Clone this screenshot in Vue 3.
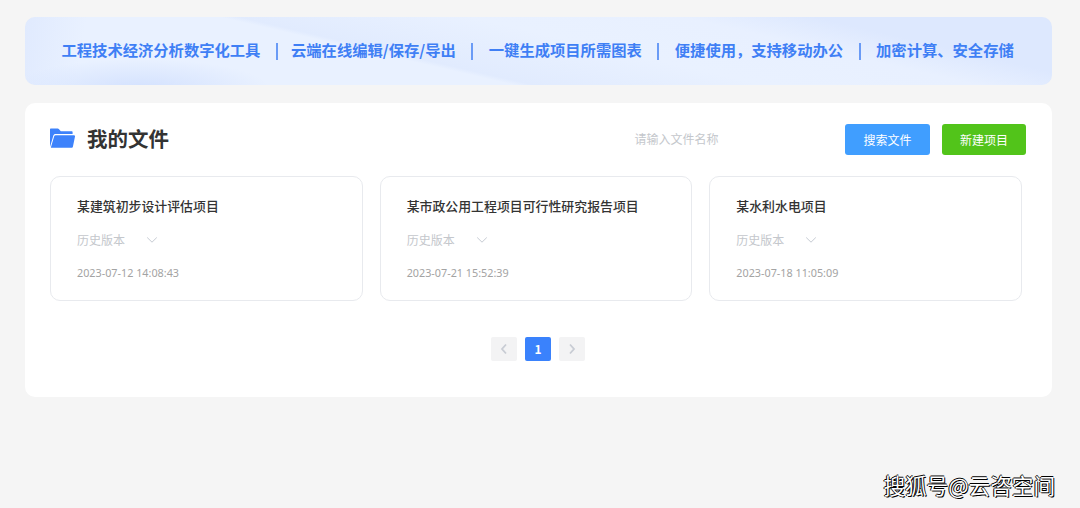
<script setup>
const slogans = [
  '工程技术经济分析数字化工具',
  '云端在线编辑/保存/导出',
  '一键生成项目所需图表',
  '便捷使用，支持移动办公',
  '加密计算、安全存储'
]

const files = [
  { id: 1, name: '某建筑初步设计评估项目', time: '2023-07-12 14:08:43' },
  { id: 2, name: '某市政公用工程项目可行性研究报告项目', time: '2023-07-21 15:52:39' },
  { id: 3, name: '某水利水电项目', time: '2023-07-18 11:05:09' }
]
</script>

<template>
  <div class="page">
    <div class="banner">
      <template v-for="(text, i) in slogans" :key="text">
        <i v-if="i > 0" class="sep"></i>
        <span>{{ text }}</span>
      </template>
    </div>

    <div class="panel">
      <div class="head">
        <div class="title">
          <svg class="folder" viewBox="0 0 25 20" width="25" height="20">
            <path d="M0 19V1.5C0 .9.4.5 1 .5h6.8c.4 0 .7.2 1 .5l2 2.2h10.8c.6 0 1 .4 1 1v1.9H5.6c-1.2 0-2 .6-2.3 1.7L0 19z" fill="#3d82fb" />
            <path d="M5.7 7.2H24c.7 0 1.1.5 1 1.2l-2.1 10.4c-.1.6-.5.9-1.1.9H.8L4.2 8.3c.2-.7.7-1.1 1.5-1.1z" fill="#3d82fb" />
          </svg>
          <h1>我的文件</h1>
        </div>
        <div class="search">请输入文件名称</div>
        <button class="btn btn-blue">搜索文件</button>
        <button class="btn btn-green">新建项目</button>
      </div>

      <div class="cards">
        <div v-for="file in files" :key="file.id" class="card">
          <div class="name">{{ file.name }}</div>
          <div class="history">
            <span>历史版本</span>
            <svg viewBox="0 0 12 8" width="12" height="8">
              <path d="M1.2 1.5 6 6.2l4.8-4.7" fill="none" stroke="#c6cbd3" stroke-width="1" />
            </svg>
          </div>
          <div class="time">{{ file.time }}</div>
        </div>
      </div>

      <div class="pager">
        <div class="pg">
          <svg viewBox="0 0 8 12" width="8" height="12"><path d="M6 1.5 2 6l4 4.5" fill="none" stroke="#c8ccd4" stroke-width="1.8" /></svg>
        </div>
        <div class="pg active">1</div>
        <div class="pg">
          <svg viewBox="0 0 8 12" width="8" height="12"><path d="M2 1.5 6 6l-4 4.5" fill="none" stroke="#c8ccd4" stroke-width="1.8" /></svg>
        </div>
      </div>
    </div>

    <div class="mark">搜狐号@云咨空间</div>
  </div>
</template>

<style>
html, body { margin: 0; background: #f5f5f5; }
</style>

<style scoped>
.page {
  position: relative;
  height: 508px;
  box-sizing: border-box;
  padding: 17px 28px 0 25px;
  background: #f5f5f5;
  overflow: hidden;
  font-family: "Noto Sans CJK SC", "Liberation Sans", sans-serif;
}

/* 顶部宣传条 */
.banner {
  height: 68px;
  padding: 0 0 4px 36.5px;
  box-sizing: border-box;
  display: flex;
  align-items: center;
  gap: 15.5px;
  border-radius: 10px;
  color: #3f7ff5;
  font-size: 15.3px;
  font-weight: 700;
  background:
    radial-gradient(ellipse 130px 30px at 115px 72px, #d3e1fe, rgba(211, 225, 254, 0)),
    linear-gradient(100deg, #e0eafe, rgba(224, 234, 254, 0) 6%),
    linear-gradient(13deg, #e9f1ff 0 37%, #e1ebfe 38.5%, #e9f1ff 56%, #e8f0ff 72%, #dde8fe 82%, #dde8fe 100%);
}
.sep { width: 2px; height: 17px; margin-top: 4px; background: #6a9bf6; }
.sep:nth-of-type(1) { margin-right: -2.4px; }

.panel {
  margin-top: 18px;
  height: 294px;
  padding: 21px 26px 0 25px;
  box-sizing: border-box;
  background: #fff;
  border-radius: 10px;
}

.head { display: flex; align-items: center; height: 31px; }
.title { display: flex; align-items: center; gap: 12px; width: 585px; }
.folder { margin-top: -3px; }
h1 { margin: -3px 0 0; font-size: 20.5px; line-height: 30px; font-weight: 700; color: #333; }
.search { width: 210px; padding-bottom: 2px; font-size: 12px; color: #c4c7cc; }
.btn {
  width: 85px;
  height: 31px;
  padding: 0;
  border: 0;
  border-radius: 3px;
  color: #fff;
  font: 12px "Noto Sans CJK SC", sans-serif;
}
.btn-blue { margin-left: 1px; background: #409eff; }
.btn-green { width: 84px; margin-left: 12px; background: #52c41a; }

.cards { display: flex; gap: 17px; margin-top: 21px; padding-right: 4px; }
.card {
  flex: 1;
  height: 125px;
  padding: 20px 26px 0;
  box-sizing: border-box;
  border: 1px solid #e8eaee;
  border-radius: 10px;
}
.name { font-size: 12.9px; line-height: 18px; font-weight: 500; color: #333; }
.history {
  display: flex;
  align-items: center;
  gap: 21px;
  margin-top: 16px;
  font-size: 12px;
  line-height: 18px;
  color: #c4c7cc;
}
.time { margin-top: 15px; font-size: 10.8px; line-height: 18px; color: #a3a3a3; font-family: "Noto Sans", sans-serif; }

.pager { display: flex; justify-content: center; gap: 8px; margin-top: 36px; }
.pg {
  width: 26px;
  height: 24px;
  display: flex;
  align-items: center;
  justify-content: center;
  border-radius: 2px;
  background: #f3f3f4;
}
.active { background: #3a82fc; color: #fff; font-size: 12px; font-weight: 700; line-height: 22px; padding-bottom: 1px; box-sizing: border-box; }

/* 右下角水印 */
.mark {
  position: absolute;
  right: 25px;
  bottom: 9px;
  font-size: 21.6px;
  line-height: 28px;
  color: #fff;
  text-shadow: 1px 1px 0 #000, -1px 0 0 #000, 0 -1px 0 #000;
}
</style>
